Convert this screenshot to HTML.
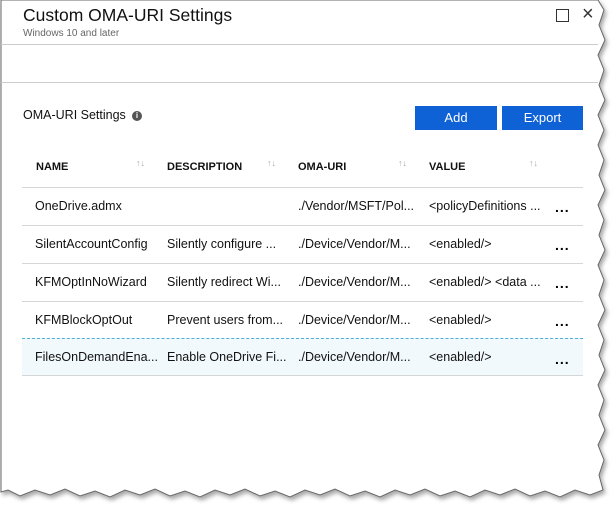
<!DOCTYPE html>
<html><head><style>
body{margin:0;width:616px;height:512px;background:#fff;overflow:hidden;position:relative;font-family:"Liberation Sans",sans-serif;}
svg.bg{position:absolute;left:0;top:0}
.t{position:absolute;white-space:nowrap;color:#111}
.h{font-size:11px;font-weight:bold;top:161px}
.s{position:absolute;font-size:9px;color:#aaa;top:158px}
.r{font-size:12.5px}
.line{position:absolute;left:22px;width:561px;height:1px;background:#d6d6d6}
.btn{position:absolute;top:106px;height:24px;background:#0f62d6;color:#fff;font-size:13px;text-align:center;line-height:24px}
.dots{position:absolute;left:555px;font-size:14px;font-weight:bold;letter-spacing:1px}
</style></head><body>
<svg class="bg" width="616" height="512">
<defs><filter id="f"><feDropShadow dx="2" dy="3" stdDeviation="2" flood-color="#000" flood-opacity="0.35"/></filter></defs>
<polygon filter="url(#f)" fill="#fff" stroke="#666" stroke-width="1" points="1,0 598,0 604,10 599,25 605,40 598,55 604,70 599,85 605,100 598,115 604,130 598,145 604,160 599,175 605,190 598,205 604,220 599,235 605,250 598,265 604,280 599,295 605,310 598,325 604,340 599,355 605,370 598,385 604,400 599,415 605,430 598,445 604,460 599,475 603,490 590,495 575,490 560,497 545,491 530,496 515,489 500,495 485,490 470,497 455,491 440,496 425,489 410,495 395,490 380,497 365,491 350,496 335,489 320,495 305,490 290,497 275,491 260,496 245,489 230,495 215,490 200,497 185,491 170,496 155,489 140,495 125,490 110,497 95,491 80,496 65,489 50,495 35,490 20,496 8,490 1,492"/>
</svg>
<div class="t" style="left:23px;top:5px;font-size:17.5px;color:#111">Custom OMA-URI Settings</div>
<div class="t" style="left:23px;top:28px;font-size:10px;color:#666">Windows 10 and later</div>
<div style="position:absolute;left:556px;top:9px;width:11px;height:11px;border:1.3px solid #333"></div>
<div class="t" style="left:582px;top:3px;font-size:20px;color:#333">×</div>
<div style="position:absolute;left:1px;top:44px;width:597px;height:1px;background:#ccc"></div>
<div style="position:absolute;left:1px;top:82px;width:597px;height:1px;background:#ccc"></div>
<div class="t" style="left:23px;top:108px;font-size:12.5px">OMA-URI Settings</div>
<div style="position:absolute;left:132px;top:111px;width:10px;height:10px;border-radius:50%;background:#555;color:#fff;font-size:8px;font-weight:bold;text-align:center;line-height:10px">i</div>
<div class="btn" style="left:415px;width:82px">Add</div>
<div class="btn" style="left:502px;width:81px">Export</div>
<div class="t h" style="left:36px">NAME</div><div class="s" style="left:136px">↑↓</div>
<div class="t h" style="left:167px">DESCRIPTION</div><div class="s" style="left:267px">↑↓</div>
<div class="t h" style="left:298px">OMA-URI</div><div class="s" style="left:398px">↑↓</div>
<div class="t h" style="left:429px">VALUE</div><div class="s" style="left:529px">↑↓</div>
<div class="line" style="top:187px"></div>
<div class="line" style="top:225px"></div>
<div class="line" style="top:263px"></div>
<div class="line" style="top:301px"></div>
<div style="position:absolute;left:22px;top:338px;width:561px;height:36px;background:#f2f9fc;border-top:1px dashed #4ab0d9;border-bottom:1px solid #d6d6d6"></div>
<div class="t r" style="left:35px;top:199px">OneDrive.admx</div>
<div class="t r" style="left:298px;top:199px">./Vendor/MSFT/Pol...</div>
<div class="t r" style="left:429px;top:199px">&lt;policyDefinitions ...</div>
<div class="t r" style="left:35px;top:237px">SilentAccountConfig</div>
<div class="t r" style="left:167px;top:237px">Silently configure ...</div>
<div class="t r" style="left:298px;top:237px">./Device/Vendor/M...</div>
<div class="t r" style="left:429px;top:237px">&lt;enabled/&gt;</div>
<div class="t r" style="left:35px;top:275px">KFMOptInNoWizard</div>
<div class="t r" style="left:167px;top:275px">Silently redirect Wi...</div>
<div class="t r" style="left:298px;top:275px">./Device/Vendor/M...</div>
<div class="t r" style="left:429px;top:275px">&lt;enabled/&gt; &lt;data ...</div>
<div class="t r" style="left:35px;top:313px">KFMBlockOptOut</div>
<div class="t r" style="left:167px;top:313px">Prevent users from...</div>
<div class="t r" style="left:298px;top:313px">./Device/Vendor/M...</div>
<div class="t r" style="left:429px;top:313px">&lt;enabled/&gt;</div>
<div class="t r" style="left:35px;top:350px">FilesOnDemandEna...</div>
<div class="t r" style="left:167px;top:350px">Enable OneDrive Fi...</div>
<div class="t r" style="left:298px;top:350px">./Device/Vendor/M...</div>
<div class="t r" style="left:429px;top:350px">&lt;enabled/&gt;</div>
<div class="dots" style="top:199px">...</div>
<div class="dots" style="top:237px">...</div>
<div class="dots" style="top:275px">...</div>
<div class="dots" style="top:313px">...</div>
<div class="dots" style="top:351px">...</div>
</body></html>
